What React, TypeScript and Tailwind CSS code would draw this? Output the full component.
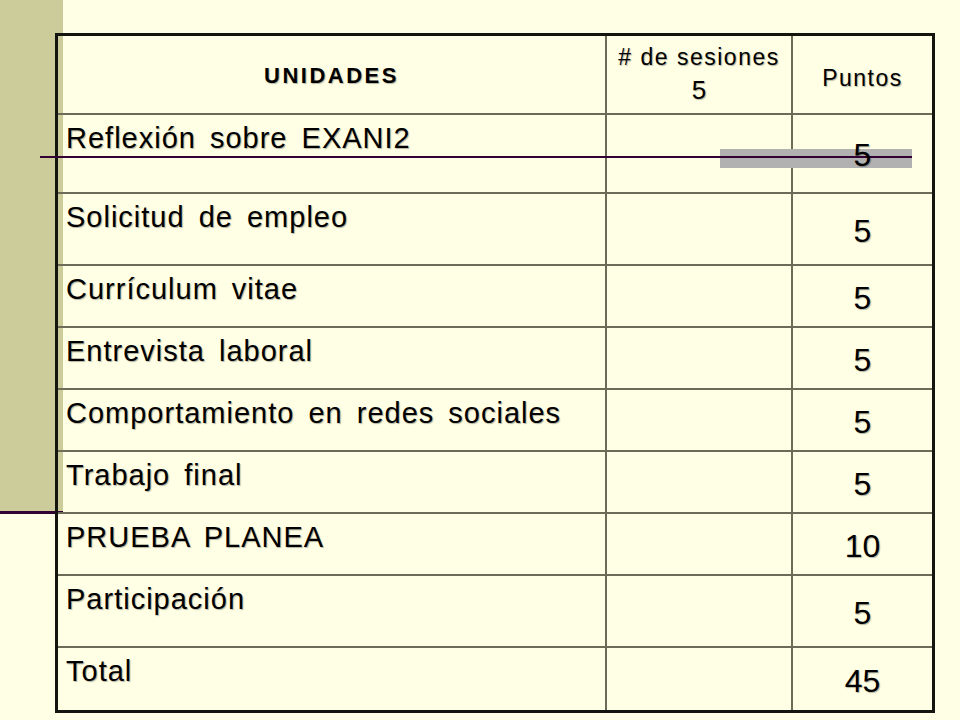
import React from "react";

type Row = { label: string; pts: string; h: string; lift?: boolean };

const rows: Row[] = [
  { label: "Reflexión sobre EXANI2", pts: "5", h: "h-[79px]", lift: true },
  { label: "Solicitud de empleo", pts: "5", h: "h-[72px]" },
  { label: "Currículum vitae", pts: "5", h: "h-[62px]" },
  { label: "Entrevista laboral", pts: "5", h: "h-[62px]" },
  { label: "Comportamiento en redes sociales", pts: "5", h: "h-[62px]" },
  { label: "Trabajo final", pts: "5", h: "h-[62px]" },
  { label: "PRUEBA PLANEA", pts: "10", h: "h-[62px]" },
  { label: "Participación", pts: "5", h: "h-[72px]" },
  { label: "Total", pts: "45", h: "h-[64px]" },
];

export default function App() {
  return (
    <div className="relative w-[960px] h-[720px] overflow-hidden bg-[#ffffe5] font-['Liberation_Sans',Arial,sans-serif] text-black [text-shadow:1px_1px_1px_rgba(0,0,0,0.3)]">
      {/* decorative side band */}
      <div className="absolute left-0 top-0 w-[63px] h-[514px] bg-[#cccc9a] border-b-[3px] border-[#330033]" />

      <div className="relative flex flex-col pl-[55px] pt-[33px]">
        <div className="w-[880px] border-[3px] border-[#151510]">
          {/* header */}
          <div className="grid grid-cols-[547px_186px_141px] h-[77px]">
            <div className="flex items-center justify-center pt-[3px] text-[22px] leading-[26px] font-bold tracking-[2.5px]">
              UNIDADES
            </div>
            <div className="flex flex-col items-center border-l-2 border-[#6b6b58] pt-[2px]">
              <div className="text-[23px] leading-[38px] tracking-[1.5px]">
                # de sesiones
              </div>
              <div className="text-[26px] leading-[30px] -mt-[1px]">5</div>
            </div>
            <div className="flex items-center justify-center border-l-2 border-[#6b6b58] pt-[7px] text-[23px] leading-[26px] tracking-[1.5px]">
              Puntos
            </div>
          </div>

          {rows.map((r) => (
            <div
              key={r.label}
              className={`grid grid-cols-[547px_186px_141px] border-t-2 border-[#6b6b58] ${r.h}`}
            >
              <div className="pl-[8px] pt-[7px] text-[29px] leading-[33px] tracking-[1px] [word-spacing:5px] whitespace-nowrap">
                {r.label}
              </div>
              <div className="border-l-2 border-[#6b6b58]" />
              <div className="flex items-center justify-center border-l-2 border-[#6b6b58] pt-[3px]">
                <span
                  className={`text-[32px] leading-[32px] ${r.lift ? "relative z-20" : ""}`}
                >
                  {r.pts}
                </span>
              </div>
            </div>
          ))}
        </div>
      </div>

      {/* overlay marks across first row */}
      <div className="absolute left-[720px] top-[149px] w-[192px] h-[19px] bg-[#b1b1b1] z-10" />
      <div className="absolute left-[40px] top-[156px] w-[872px] h-[2px] bg-[#330033] z-10" />
    </div>
  );
}
